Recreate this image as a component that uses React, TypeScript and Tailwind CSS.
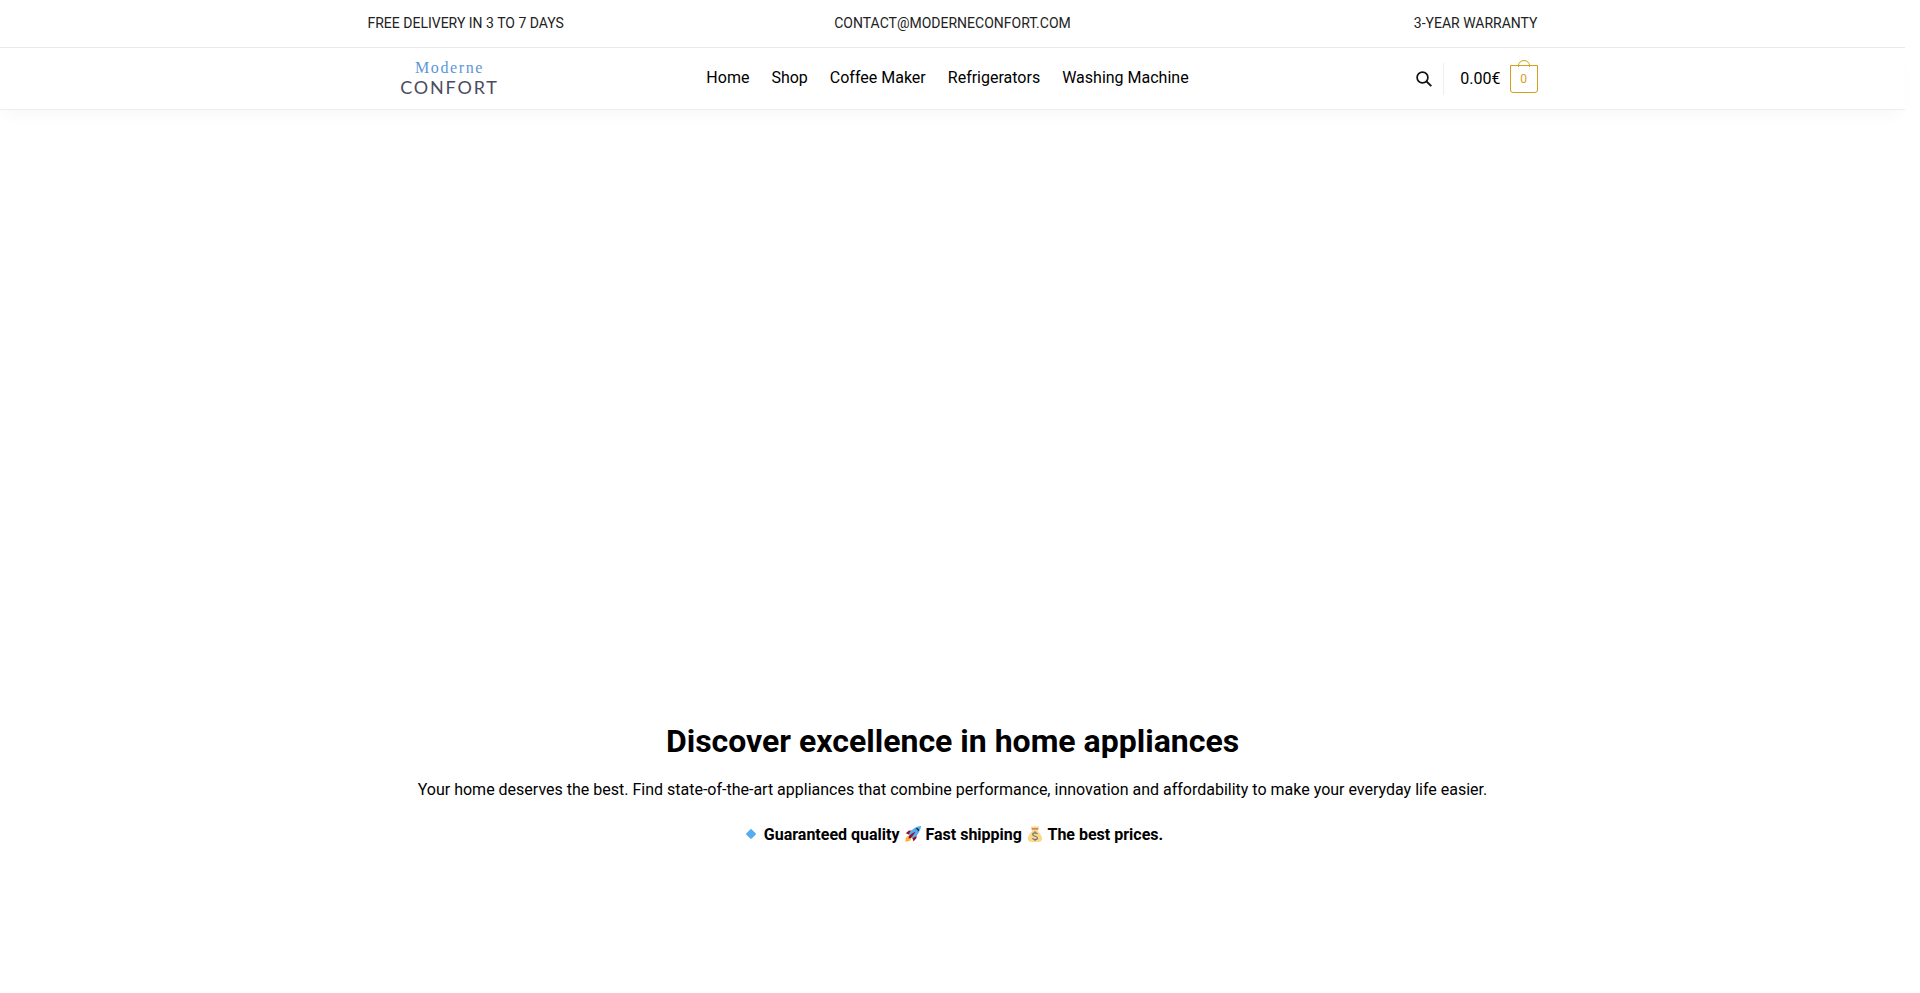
import type { ReactNode } from "react";

const navItems = [
  { label: "Home", href: "#home" },
  { label: "Shop", href: "#shop" },
  { label: "Coffee Maker", href: "#coffee-maker" },
  { label: "Refrigerators", href: "#refrigerators" },
  { label: "Washing Machine", href: "#washing-machine" },
];

function Container({ className = "", children }: { className?: string; children: ReactNode }) {
  return <div className={`mx-auto w-full max-w-[1170px] ${className}`}>{children}</div>;
}

function TopBar() {
  return (
    <div className="border-b border-[#e8e8e8]">
      <Container className="grid grid-cols-3 items-center py-[13px] text-sm leading-[21px] uppercase text-[#222]">
        <p>Free delivery in 3 to 7 days</p>
        <a href="mailto:contact@moderneconfort.com" className="text-center">
          contact@moderneconfort.com
        </a>
        <p className="text-right">3-year warranty</p>
      </Container>
    </div>
  );
}

function Logo() {
  return (
    <a href="#home" className="flex w-[164px] flex-col items-center leading-none">
      <span className="font-['Liberation_Serif',serif] text-base leading-4 tracking-widest text-[#5b97d8]">
        Moderne
      </span>
      <span className="font-[Lato,sans-serif] text-lg leading-[22px] tracking-widest text-[#4c4c60]">
        CONFORT
      </span>
    </a>
  );
}

function SearchIcon() {
  return (
    <svg viewBox="0 0 16 16" className="size-4" fill="none" stroke="#111" strokeWidth="1.7">
      <circle cx="6.5" cy="6.5" r="5.4" />
      <path d="M10.4 10.4 15.3 15.1" strokeWidth="2" />
    </svg>
  );
}

function CartIcon({ count }: { count: number }) {
  return (
    <span className="relative flex h-7 w-7 items-center justify-center rounded-b-[3px] border border-[#d1a01c] text-[12px] leading-none text-[#d1a01c]">
      {/* Bag handle */}
      <svg
        viewBox="0 0 12 7"
        className="absolute -top-[6px] left-[7px] h-[7px] w-3"
        fill="none"
        stroke="#d1a01c"
      >
        <path d="M.5 7V5.5a5.5 5 0 0 1 11 0V7" />
      </svg>
      {count}
    </span>
  );
}

function Header() {
  return (
    <header className="border-b border-[#eee] shadow-[0_10px_15px_-5px_rgba(0,0,0,0.03)]">
      <Container className="flex h-[61px] items-center">
        <Logo />
        <nav className="flex flex-1 justify-center gap-[22px] pb-[2px] text-base text-black">
          {navItems.map((item) => (
            <a key={item.label} href={item.href}>
              {item.label}
            </a>
          ))}
        </nav>
        <div className="flex w-[174px] items-center justify-end">
          <button type="button" aria-label="Search" className="pr-[11px]">
            <SearchIcon />
          </button>
          <a
            href="#cart"
            className="flex h-8 items-center gap-[9px] border-l border-[#eee] pl-4 text-base text-black"
          >
            <span>0.00€</span>
            <CartIcon count={0} />
          </a>
        </div>
      </Container>
    </header>
  );
}

function DiamondEmoji() {
  return (
    <svg viewBox="0 0 36 36" className="mx-px inline-block size-4 align-[-2px]">
      <path
        fill="#55acee"
        d="M16.4 7.6c.9-.9 2.300-.9 3.200 0l8.800 8.800c.9.9.9 2.300 0 3.200l-8.800 8.800c-.9.9-2.300.9-3.200 0l-8.800-8.800c-.9-.9-.9-2.300 0-3.200z"
      />
    </svg>
  );
}

function RocketEmoji() {
  return (
    <svg viewBox="0 0 36 36" className="mx-px inline-block size-4 align-[-2px]">
      <path fill="#a0041e" d="M1 17l8-7 16 1 1 16-7 8s.001-5.999-6-12-12-6-12-6z" />
      <path fill="#ffac33" d="M.973 35s-.036-7.979 2.985-11S15 21.187 15 21.187 14.999 29 11.999 32c-3 3-11.026 3-11.026 3z" />
      <circle fill="#ffcc4d" cx="8.999" cy="27" r="4" />
      <path fill="#55acee" d="M35.999 0s-10 0-22 10c-6 5-6 14-4 16s11 2 16-4c10-12 10-22 10-22z" />
      <path d="M26.999 5c-1.623 0-3.013.971-3.641 2.360.502-.227 1.055-.360 1.641-.360 2.209 0 4 1.791 4 4 0 .586-.133 1.139-.359 1.640 1.389-.627 2.359-2.017 2.359-3.640 0-2.209-1.791-4-4-4z" />
      <path fill="#a0041e" d="M8 28s0-4 1-5 13.001-10.999 14-10-9.001 13-10.001 14S8 28 8 28z" />
    </svg>
  );
}

function MoneyBagEmoji() {
  return (
    <svg viewBox="0 0 36 36" className="mx-px inline-block size-4 align-[-2px]">
      <path
        fill="#fdd888"
        d="M34 26.5C32.500 19 24 11 24 11l2.500-8C27 1 25 0 23 1c-2 .8-3 0-5-1-2 1-3 1.800-5 1-2-1-4 0-3.500 2L12 11S3.500 19 2 26.5C1 32 5 36 10 36h16c5 0 9-4 8-9.500z"
      />
      <path fill="#bf6952" d="M11.500 5h13a1.500 1.500 0 0 1 0 3h-13a1.500 1.500 0 0 1 0-3z" />
      <path
        fill="none"
        stroke="#67757f"
        strokeWidth="2.6"
        d="M23.500 18.500c-.5-2-2.500-3-5.500-3-3.200 0-5.300 1.400-5.300 3.700 0 5 10.800 2.500 10.800 7.600 0 2.300-2.200 3.700-5.500 3.700s-5.300-1.200-5.600-3.500M18 12v3.500M18 30.500V34"
      />
    </svg>
  );
}

function Intro() {
  return (
    <section className="text-center text-black">
      <Container>
        <h1 className="text-[32px] leading-[42px] font-bold">Discover excellence in home appliances</h1>
        <p className="mt-4 text-base leading-6">
          Your home deserves the best. Find state-of-the-art appliances that combine performance,
          innovation and affordability to make your everyday life easier.
        </p>
        <p className="mt-[21px] text-base leading-6 font-bold">
          <DiamondEmoji /> Guaranteed quality <RocketEmoji /> Fast shipping <MoneyBagEmoji /> The best
          prices.
        </p>
      </Container>
    </section>
  );
}

export default function App() {
  return (
    <div className="bg-white pr-[15px] font-[Roboto,sans-serif]">
      <TopBar />
      <Header />
      <main className="pt-[610px] pb-20">
        <Intro />
      </main>
    </div>
  );
}
